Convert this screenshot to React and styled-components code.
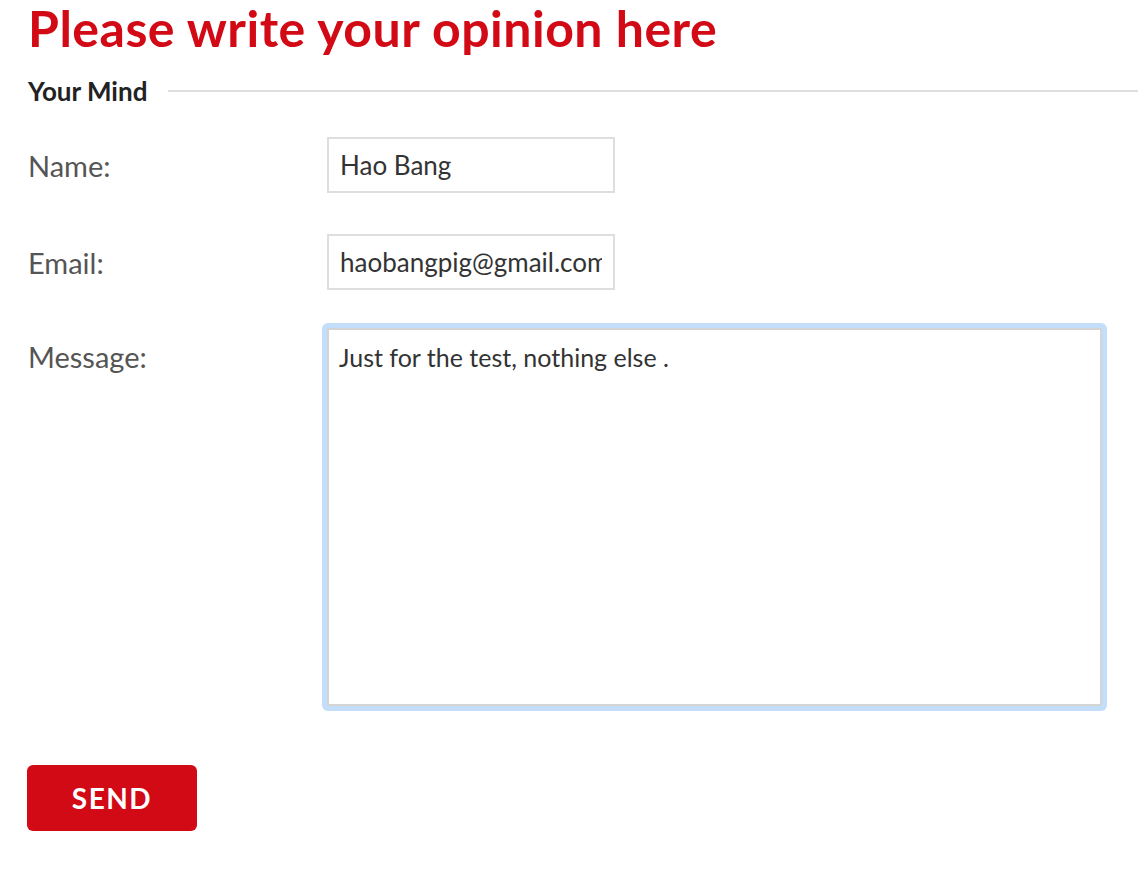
import { useEffect, useRef } from "react";
import styled, { createGlobalStyle } from "styled-components";

const Global = createGlobalStyle`
  body {
    margin: 0;
    background: #fff;
    font-family: Lato, "Open Sans", sans-serif;
  }
`;

const Page = styled.div`
  padding-left: 28px;
`;

const Title = styled.h1`
  margin: 0;
  font-size: 50px;
  font-weight: 700;
  line-height: 56px;
  letter-spacing: 0.5px;
  color: #d20a16;
`;

const Legend = styled.div`
  display: flex;
  align-items: center;
  gap: 21px;
  margin-top: 19px;
  font-size: 26px;
  font-weight: 700;
  color: #222;
  &::after {
    content: "";
    flex: 1;
    height: 2px;
    background: #dedede;
  }
`;

const Row = styled.div`
  display: grid;
  grid-template-columns: 299px 1fr;
  align-items: start;
  margin-top: ${(p) => p.$top}px;
`;

const Label = styled.label`
  font-size: 29px;
  color: #555;
  line-height: 54px;
  padding-top: 2px;
`;

const Input = styled.input`
  box-sizing: border-box;
  width: 288px;
  height: 56px;
  border: 2px solid #dedede;
  padding: 0 11px;
  font-family: Lato, sans-serif;
  font-size: 26px;
  color: #333;
  outline: none;
`;

const Area = styled.textarea`
  box-sizing: border-box;
  width: 775px;
  height: 378px;
  border: 2px solid #d4d4d4;
  border-radius: 2px;
  padding: 12px 10px;
  font-family: Lato, sans-serif;
  font-size: 25px;
  color: #333;
  resize: none;
  outline: none;
  box-shadow: 0 0 0 5px #c2defa;
  caret-color: #111;
`;

const Send = styled.button`
  margin-top: 59px;
  width: 170px;
  height: 66px;
  margin-left: -1px;
  border: none;
  border-radius: 6px;
  background: #d20a16;
  color: #fff;
  font-family: Lato, sans-serif;
  font-size: 28px;
  font-weight: 700;
  letter-spacing: 1.5px;
`;

export default function App() {
  const area = useRef(null);
  useEffect(() => {
    const el = area.current;
    if (el) {
      el.focus();
      el.setSelectionRange(el.value.length, el.value.length);
    }
  }, []);

  return (
    <Page>
      <Global />
      <Title>Please write your opinion here</Title>
      <Legend>Your Mind</Legend>
      <Row $top={30}>
        <Label>Name:</Label>
        <Input defaultValue="Hao Bang" />
      </Row>
      <Row $top={41}>
        <Label>Email:</Label>
        <Input defaultValue="haobangpig@gmail.com" />
      </Row>
      <Row $top={38}>
        <Label>Message:</Label>
        <Area ref={area} defaultValue="Just for the test, nothing else ." />
      </Row>
      <Send>SEND</Send>
    </Page>
  );
}
